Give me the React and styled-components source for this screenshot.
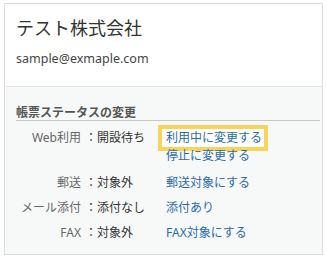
import React from 'react';
import styled, { createGlobalStyle } from 'styled-components';

const GlobalStyle = createGlobalStyle`
  body {
    margin: 0;
    background: #ffffff;
    font-family: "Noto Sans", "Noto Sans CJK JP", sans-serif;
  }
`;

const Card = styled.div`
  box-sizing: border-box;
  width: 319px;
  height: 252px;
  margin: 3px 0 0 4px;
  border: 1px solid #dcdcdc;
  display: flex;
  flex-direction: column;
`;

const Header = styled.div`
  background: #fff;
  padding: 10px 11px 0;
  height: 82px;
  box-sizing: border-box;
`;

const CompanyName = styled.h2`
  margin: 0;
  font-family: "Noto Sans CJK JP", sans-serif;
  font-size: 18px;
  font-weight: 400;
  line-height: 26px;
  color: #333;
`;

const Email = styled.p`
  margin: 10px 0 0;
  font-size: 12.5px;
  line-height: 18px;
  color: #444;
`;

const Body = styled.div`
  flex: 1;
  background: #f7f9f9;
  border-top: 1px solid #e6e6e6;
  padding: 16px 2px 0 11px;
`;

const SectionTitle = styled.h3`
  margin: 0;
  border-bottom: 1px solid #c8c8c8;
  font-family: "Noto Sans CJK JP", sans-serif;
  font-size: 12px;
  font-weight: 700;
  line-height: 17px;
  color: #555;
`;

const StatusGrid = styled.div`
  display: grid;
  grid-template-columns: 65px 85px 1fr;
  row-gap: 7px;
  margin-top: 8px;
  font-family: "Noto Sans", "Noto Sans CJK JP", sans-serif;
  font-size: 12px;
  line-height: 18px;
`;

const Label = styled.div`
  text-align: right;
  color: #666;
  padding-top: ${p => p.$pad || 0}px;
`;

const Value = styled.div`
  color: #333;
  padding-left: 4px;
  padding-top: ${p => p.$pad || 0}px;
`;

const Links = styled.div`
  display: flex;
  flex-direction: column;
  align-items: flex-start;
  padding-top: ${p => p.$pad || 0}px;
`;

const Action = styled.a`
  color: #2a6aa8;
  text-decoration: none;
  cursor: pointer;
  ${p => p.$focus && `
    margin-left: -4px;
    padding: 0 2px 0 4px;
    outline: 4px solid #f8d45c;
    background: #fff;
  `}
`;

const rows = [
  { label: 'Web利用', value: '開設待ち', actions: ['利用中に変更する', '停止に変更する'], focus: 0 },
  { label: '郵送', value: '対象外', actions: ['郵送対象にする'], pad: 2 },
  { label: 'メール添付', value: '添付なし', actions: ['添付あり'] },
  { label: 'FAX', value: '対象外', actions: ['FAX対象にする'] },
];

export default function App() {
  return (
    <>
      <GlobalStyle />
      <Card>
        <Header>
          <CompanyName>テスト株式会社</CompanyName>
          <Email>sample@exmaple.com</Email>
        </Header>
        <Body>
          <SectionTitle>帳票ステータスの変更</SectionTitle>
          <StatusGrid>
            {rows.map(r => (
              <React.Fragment key={r.label}>
                <Label $pad={r.pad}>{r.label}</Label>
                <Value $pad={r.pad}>：{r.value}</Value>
                <Links $pad={r.pad}>
                  {r.actions.map((a, i) => (
                    <Action key={a} $focus={r.focus === i}>{a}</Action>
                  ))}
                </Links>
              </React.Fragment>
            ))}
          </StatusGrid>
        </Body>
      </Card>
    </>
  );
}
